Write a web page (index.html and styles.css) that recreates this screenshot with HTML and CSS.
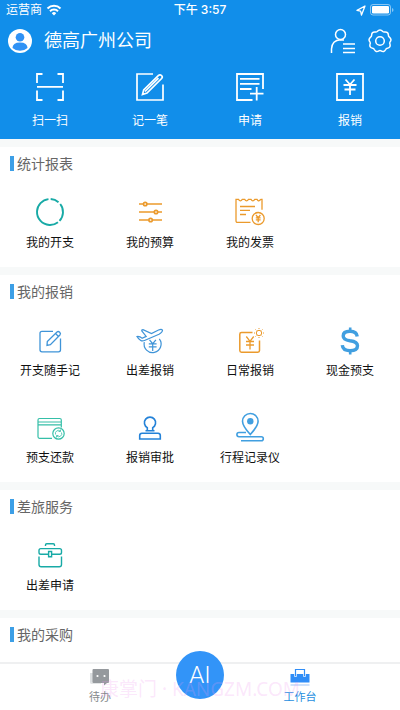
FILE: index.html
```html
<!DOCTYPE html>
<html lang="zh-CN">
<head>
<meta charset="utf-8">
<meta name="viewport" content="width=device-width, initial-scale=1">
<title>工作台</title>
<link rel="stylesheet" href="styles.css">
</head>
<body>
<header class="header">
  <div class="status">
    <div class="status-left">
      <span>运营商</span>
      <svg width="16" height="12" viewBox="0 0 16 12" fill="none" stroke="currentColor" stroke-width="2"><path d="M1.500 4.500a9.200 9.200 0 0 1 13 0M4 7.200a5.600 5.600 0 0 1 8 0"/><path d="M8 11.500 5.800 9.200a3.100 3.100 0 0 1 4.400 0Z" fill="currentColor" stroke="none"/></svg>
    </div>
    <time class="clock">下午 3:57</time>
    <div class="status-right">
      <svg width="10" height="11" viewBox="0 0 10 11" fill="none" stroke="currentColor" stroke-width="1.300" stroke-linejoin="round"><path d="M9 1 1 5.400l3.600.8.9 3.800Z"/></svg>
      <svg width="24" height="12" viewBox="0 0 24 12"><rect x=".5" y=".5" width="20" height="10.500" rx="2.500" fill="none" stroke="#fff" stroke-opacity=".5"/><rect x="2" y="2" width="17" height="7.500" rx="1.300" fill="#fff"/><path d="M22 4v4q1.500-.5 1.500-2T22 4Z" fill="#fff" fill-opacity=".5"/></svg>
    </div>
  </div>
  <div class="titlebar">
    <button class="icon-button" type="button" aria-label="个人中心">
      <svg width="24" height="24" viewBox="0 0 24 24"><circle cx="12" cy="12" r="12" fill="#fff"/><circle cx="12" cy="8.300" r="4.300" fill="#2f92f5"/><path d="M4.500 19q0-5.600 7.500-5.600t7.500 5.600q-3 2.800-7.500 2.800T4.500 19Z" fill="#2f92f5"/></svg>
    </button>
    <h1 class="company">德高广州公司</h1>
    <button class="icon-button" type="button" aria-label="联系人">
      <svg width="26" height="26" viewBox="0 0 26 26" fill="none" stroke="currentColor" stroke-width="1.500"><circle cx="10.500" cy="6.500" r="5"/><path d="M1.500 25v-4Q2 12 10.500 11.700l3.500.2M13 16h12M13 20.500h12M13 24.500h12"/></svg>
    </button>
    <button class="icon-button" type="button" aria-label="设置">
      <svg width="24" height="24" viewBox="0 0 24 24" fill="none" stroke="currentColor" stroke-width="1.500" stroke-linejoin="round"><path d="M9.200 2.500Q12-.700 14.800 2.500q.8.700 2 .4 3.500-.3 3.600 3.400 0 1.200 1 1.900 2.800 2.300.6 4.900-.7 1 0 2 .9 3.600-2.700 4.200-1.100.1-1.600 1.200-1.600 3.300-4.600 1.400-1.100-.7-2.200 0-3 1.900-4.600-1.400-.5-1.100-1.600-1.200-3.600-.6-2.700-4.200.7-1 0-2-2.200-2.600.6-4.900 1-.7 1-1.900.1-3.700 3.600-3.400 1.200.3 2-.4Z"/><circle cx="12" cy="12" r="4.300"/></svg>
    </button>
  </div>
  <nav class="grid shortcuts" aria-label="快捷操作">
    <a class="shortcut" href="#scan">
      <svg width="28" height="28" viewBox="0 0 28 28" fill="none" stroke="currentColor" stroke-width="1.800"><path d="M1 10V1h5.500M21.500 1H27v9M1 17.500V27h5.500M21.500 27H27v-9.500M1 13.800h26"/></svg>
      <span>扫一扫</span>
    </a>
    <a class="shortcut" href="#note">
      <svg width="28" height="28" viewBox="0 0 28 28" fill="none" stroke="currentColor" stroke-width="1.700"><path d="M17 1H1v26h26V11.500"/><path d="m6.500 21.500 1.200-4.600L22.500 2.400q1.500-1.300 3 .1 1.500 1.500.1 3L11 20.100ZM9 18.500 22.500 5.200"/></svg>
      <span>记一笔</span>
    </a>
    <a class="shortcut" href="#apply">
      <svg width="28" height="28" viewBox="0 0 28 28" fill="none" stroke="currentColor" stroke-width="1.800"><path d="M27 16V1H1v26h15.500M4 5.800h19.500M4 10.800h19.500M4 16h11.500M14 20.700h13.500M20.700 14v13.500"/></svg>
      <span>申请</span>
    </a>
    <a class="shortcut" href="#claim">
      <svg width="28" height="28" viewBox="0 0 28 28" fill="none" stroke="currentColor" stroke-width="1.800"><path d="M1 1h26v26H1ZM9.500 6.500l4.500 5 4.500-5M14 11.500v10.500M7.500 12h13M8.500 16.500h11"/></svg>
      <span>报销</span>
    </a>
  </nav>
</header>

<main class="content">
  <section class="card">
    <h2 class="card-title">统计报表</h2>
    <div class="grid">
      <a class="item teal" href="#spend">
        <svg class="icon" viewBox="0 0 30 30"><circle cx="15" cy="15" r="13" stroke-width="1.900" pathLength="360" stroke-dasharray="38 11 81 9 211 10" transform="rotate(-87 15 15)"/></svg>
        <span>我的开支</span>
      </a>
      <a class="item orange" href="#budget">
        <svg class="icon" viewBox="0 0 30 30" stroke-width="1.700"><path d="M4 7h4.500M11.900 7H27M4 15h15.200M22.700 15H27M4 23h9.800M17.300 23H27"/><circle cx="10.200" cy="7" r="1.700"/><circle cx="21" cy="15" r="1.700"/><circle cx="15.600" cy="23" r="1.700"/></svg>
        <span>我的预算</span>
      </a>
      <a class="item orange" href="#invoice">
        <svg class="icon" viewBox="0 0 30 30" stroke-width="1.300"><path d="M15.500 25.300H2.500q-1.500 0-1.500-1.500V2.300h2.500q1.800 3 3.800 0h2.400q1.800 3 3.800 0H16q1.800 3 3.800 0h2.200q1.300 2.600 2.800 1l1.200-1h1v10.500M5 9.500h15M5 13.300h10M5 17.500h6"/><circle cx="23.200" cy="21.500" r="6"/><path d="m21 18 2.200 2.700 2.200-2.700M20.800 20.800h4.800M20.800 22.800h4.800M23.200 20.700v4.500"/></svg>
        <span>我的发票</span>
      </a>
    </div>
  </section>

  <section class="card">
    <h2 class="card-title">我的报销</h2>
    <div class="grid">
      <a class="item blue" href="#quick-note">
        <svg class="icon" viewBox="0 0 30 30" stroke-width="1.300"><path d="M18 6.300H7Q5 6.300 5 8.300v16.500q0 2 2 2h16.500q2 0 2-2V13.500"/><path d="m12 20.500.3-4L22 7q1.200-1.200 2.700.2 1.400 1.400.2 2.800l-9.500 9.700ZM20.500 8.500l3 3"/></svg>
        <span>开支随手记</span>
      </a>
      <a class="item blue" href="#travel-claim">
        <svg class="icon" viewBox="0 0 30 30" stroke-width="1.200"><path d="M2 11.500q3-.3 5 1.700l4.200-1.800L6.800 6q-.4-1.300 1.200-1.400L16.500 8.500 23.500 5q3.200-1.200 4 .2.300 1.800-3.500 4L9.500 15.500q-2.300 1-4-.3Q3 13.500 2 11.500ZM9.300 17.200a8.500 8.500 0 1 0 15-3.300"/><path d="m14.500 14.800 3.200 3.900 3.200-3.900M13.800 18.900h7.800M13.800 21.900h7.800M17.700 18.900v7"/></svg>
        <span>出差报销</span>
      </a>
      <a class="item orange" href="#daily-claim">
        <svg class="icon" viewBox="0 0 30 30" stroke-width="1.500"><path d="M17.500 7.500h-11q-1.700 0-1.700 1.700v16.300q0 1.700 1.700 1.700h16.300q1.700 0 1.700-1.700V15.500"/><path d="m11.300 11.500 3.700 4.800 3.700-4.800M11 16.500h8M11 20h8M15 16.500v8" stroke-width="1.300"/><circle cx="24" cy="8" r="2.700" stroke-width="1"/><path d="M24 3v1M24 12v1M19 8h1M28 8h1M20.500 4.500l.8.800M26.700 10.700l.8.800M27.500 4.500l-.8.800M20.500 11.500l.8-.8" stroke-width="1"/></svg>
        <span>日常报销</span>
      </a>
      <a class="item sky" href="#cash">
        <svg class="icon" viewBox="0 0 30 30" stroke-width="3.400"><path d="M22.200 11.500q-.5-5.200-7.200-5.200-6.800 0-6.800 4.600 0 3.800 6.800 4.800 7.500.9 7.500 5.100 0 4.900-7.500 4.900-7.200 0-7.700-5.500"/><path d="M15.200 2.500v4M15.200 25.500v4" stroke-width="2.600"/></svg>
        <span>现金预支</span>
      </a>
      <a class="item green" href="#repay">
        <svg class="icon" viewBox="0 0 30 30" stroke-width="1.200"><path d="M17 26.300H4.500q-1.500 0-1.500-1.500V8q0-1.500 1.500-1.500h20.300q1.500 0 1.500 1.500v7.500M3 10h23.300M3 12.800h23.300"/><circle cx="23.500" cy="21.500" r="5.700"/><path d="M20.600 22.500a3 3 0 0 1 4.700-3.400M26.500 20.500a3 3 0 0 1-4.700 3.500M25.500 17.500v2h-2M21.500 25.500v-2h2" stroke-width=".8"/></svg>
        <span>预支还款</span>
      </a>
      <a class="item royal" href="#approve">
        <svg class="icon" viewBox="0 0 30 30" stroke-width="1.600"><path d="M12.300 18.800v-3.200a5.600 5.600 0 1 1 5.400 0v3.200M10.500 18.800h9M4.700 27v-3.500q0-2.300 2.300-2.300h16q2.300 0 2.300 2.300V27Z"/></svg>
        <span>报销审批</span>
      </a>
      <a class="item sky" href="#route">
        <svg class="icon" viewBox="0 0 30 30" stroke-width="1.600"><path d="M15.300 22.500Q7.500 14 7.500 9.300a7.800 7.800 0 0 1 15.600 0q0 4.700-7.800 13.200Z"/><circle cx="15.300" cy="9.200" r="3.200" fill="currentColor" stroke="none"/><path d="M11 20.500H4a2.100 2.100 0 0 0 0 4.200h22.300a2 2 0 0 1 0 4H6"/></svg>
        <span>行程记录仪</span>
      </a>
    </div>
  </section>

  <section class="card">
    <h2 class="card-title">差旅服务</h2>
    <div class="grid">
      <a class="item teal" href="#travel-apply">
        <svg class="icon" viewBox="0 0 30 30" stroke-width="1.400"><path d="M10.500 6V5q0-1.200 1.200-1.200h6.600q1.200 0 1.200 1.200v1M13.500 14.200H5.800q-1.800 0-1.800-1.800v-2q0-1.800 1.800-1.800h18.900q1.800 0 1.800 1.800v2q0 1.800-1.800 1.800h-8M4 16.500v8q0 2.200 2.200 2.200h18.100q2.200 0 2.200-2.200v-8M13.600 11.500h3v5.200h-3Z"/></svg>
        <span>出差申请</span>
      </a>
    </div>
  </section>

  <section class="card">
    <h2 class="card-title">我的采购</h2>
  </section>
</main>

<nav class="tabbar" aria-label="主导航">
  <a class="tab" href="#todo">
    <svg width="20" height="18" viewBox="0 0 20 18"><path d="M0 5h3v11H1.500Q0 16 0 14Z" fill="#dcdfe1"/><path d="M1 14h10v2H1Z" fill="#e3e5e6"/><path d="M3.500 1h14.500q1 0 1 1v12q0 1-1 1h-1l-3 2.500V15H3.500q-1 0-1-1V2q0-1 1-1Z" fill="#95999d"/><circle cx="7.500" cy="8" r="1.100" fill="#fff"/><circle cx="14.500" cy="8" r="1.100" fill="#fff"/></svg>
    <span>待办</span>
  </a>
  <button class="ai" type="button">AI</button>
  <a class="tab active" href="#workbench">
    <svg width="20" height="18" viewBox="0 0 20 18"><path d="M.5 6h19v8.500H.5Z" fill="#2f8df7"/><path d="M5.500 7V1.500h9V7" fill="none" stroke="#2f8df7" stroke-width="1.200"/><path d="M4.500 6v2.500h2V6M13.500 6v2.500h2V6" fill="none" stroke="#fff" stroke-width=".7"/><path d="M.5 16h19v2H.5Z" fill="#cfe2fb"/></svg>
    <span>工作台</span>
  </a>
  <span class="watermark">康掌门 · KANGZM.COM</span>
</nav>
</body>
</html>
```
FILE: styles.css
```css
* {
  box-sizing: border-box;
}

body {
  display: flex;
  flex-direction: column;
  min-height: 100vh;
  margin: 0;
  background: #f7f9f9;
  color: #111;
  font-family: Roboto, "Noto Sans CJK SC", sans-serif;
  font-size: 12px;
  line-height: 20px;
}

a {
  color: inherit;
  text-decoration: none;
}

button {
  padding: 0;
  border: 0;
  background: none;
  color: inherit;
  font: inherit;
}

svg {
  display: block;
  flex: none;
}

.header {
  background: #118eea;
  color: #fff;
}

.status {
  display: grid;
  grid-template-columns: 1fr auto 1fr;
  align-items: center;
  height: 20px;
  padding: 0 6px;
}

.status-left,
.status-right {
  display: flex;
  align-items: center;
  gap: 4px;
}

.status-right {
  justify-content: flex-end;
}

.clock {
  font-family: Inter, "Noto Sans CJK SC", sans-serif;
  font-weight: 500;
}

.titlebar {
  display: flex;
  align-items: center;
  gap: 12px;
  height: 42px;
  padding: 0 8px;
}

.company {
  flex: 1;
  margin: 0;
  font-size: 18px;
  font-weight: 400;
}

.grid {
  display: grid;
  grid-template-columns: repeat(4, 1fr);
}

.shortcut {
  display: flex;
  flex-direction: column;
  align-items: center;
  gap: 10px;
  padding: 11px 0 8px;
}

.content {
  display: flex;
  flex: 1;
  flex-direction: column;
  gap: 8px;
  padding-top: 8px;
}

.card {
  background: #fff;
}

.card:last-child {
  flex: 1;
}

.card-title {
  display: flex;
  align-items: center;
  gap: 3px;
  height: 33px;
  margin: 0;
  padding-left: 10px;
  color: #666;
  font-size: 14px;
  font-weight: 400;
}

.card-title::before {
  width: 4px;
  height: 15px;
  background: #3d9fe6;
  content: "";
}

.item {
  display: flex;
  flex-direction: column;
  align-items: center;
  gap: 6px;
  padding: 17px 0 14px;
}

.item span {
  color: #111;
}

.icon {
  width: 30px;
  height: 30px;
  fill: none;
  stroke: currentColor;
}

.teal {
  color: #18aaa6;
}

.green {
  color: #35bfa8;
}

.orange {
  color: #eb9a2c;
}

.blue {
  color: #3f94d8;
}

.royal {
  color: #2482d8;
}

.sky {
  color: #419fe0;
}

.tabbar {
  position: sticky;
  bottom: 0;
  display: grid;
  grid-template-columns: repeat(4, 1fr);
  height: 48px;
  border-top: 2px solid #eff0f1;
  background: #fff;
  font-size: 11px;
}

.tab {
  display: flex;
  grid-column: 1 / 3;
  grid-row: 1;
  flex-direction: column;
  align-items: center;
  gap: 2px;
  padding-top: 4px;
  color: #85898c;
}

.tab.active {
  grid-column: 3 / 5;
  color: #1f8fe0;
}

.ai {
  position: absolute;
  top: -13px;
  left: 50%;
  width: 48px;
  height: 48px;
  margin-left: -24px;
  border-radius: 50%;
  background: #3294f8;
  color: #fff;
  font-size: 24px;
  font-weight: 300;
}

.watermark {
  position: absolute;
  right: 0;
  bottom: 11px;
  left: 0;
  color: rgb(240 150 240 / 24%);
  font-family: "Noto Sans", "Noto Sans CJK SC", sans-serif;
  font-size: 19px;
  text-align: center;
  white-space: nowrap;
  pointer-events: none;
}
```
